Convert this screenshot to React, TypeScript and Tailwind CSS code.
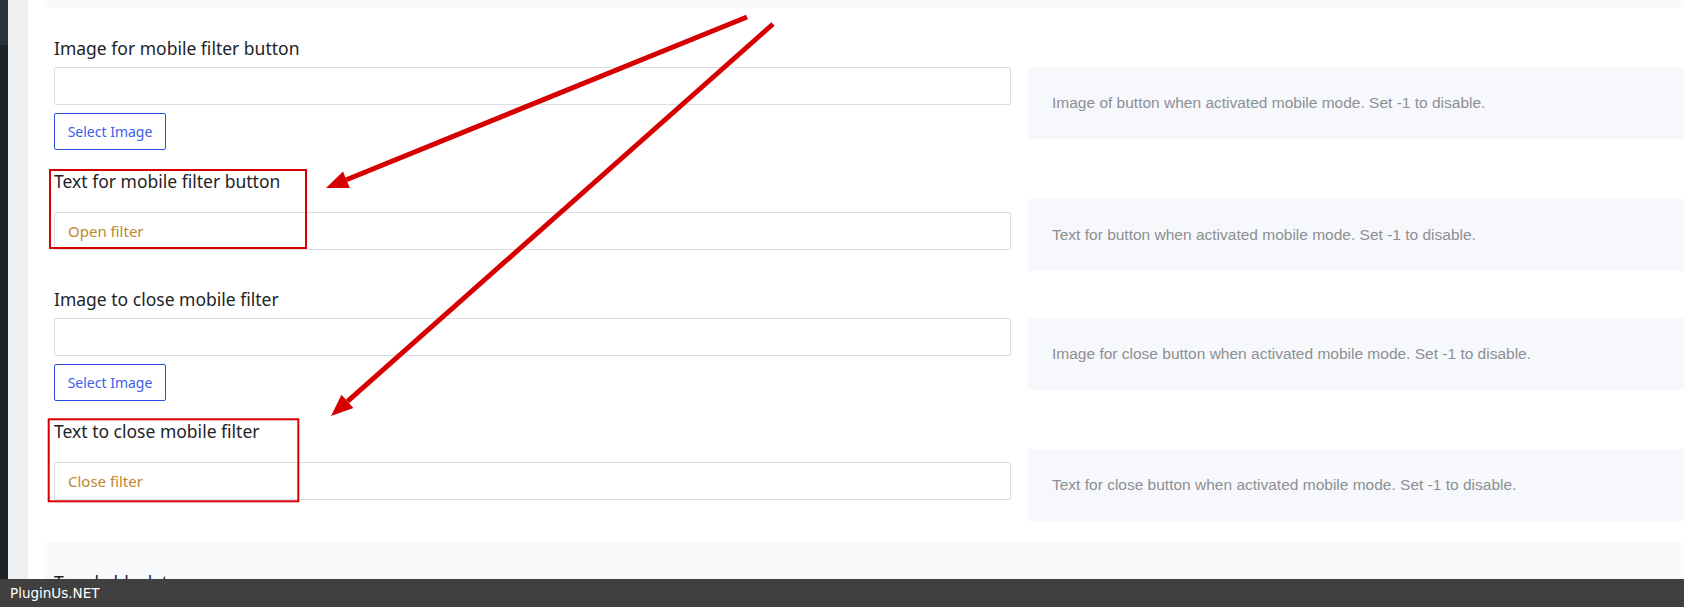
import React from "react";

const labelCls = "h-[24px] leading-[24px] text-[17.5px] text-[#1d2327] font-['Noto_Sans',sans-serif]";
const inputCls = "h-[38px] w-full border border-[#dcdde3] rounded-[2px] bg-white flex items-center pl-[13px] text-[15px] text-[#bd882f] font-['Noto_Sans',sans-serif]";
const descCls = "flex-1 h-[72px] bg-[#f7f8fb] flex items-center pl-[24px] text-[15.5px] text-[#8c8f94] font-['Liberation_Sans',sans-serif]";
const btnCls = "mt-[8px] h-[37px] w-[112px] border border-[#2d4fe0] rounded-[2px] bg-white text-[14px] text-[#3c5ee8] font-['Noto_Sans',sans-serif] flex items-center justify-center";

function Row({ label, value, button, desc, text }: { label: string; value?: string; button?: boolean; desc: string; text?: boolean }) {
  return (
    <div className="flex items-start gap-[17px]">
      <div className="w-[957px] shrink-0 flex flex-col">
        <div className={labelCls}>{label}</div>
        <div className={inputCls + (text ? " mt-[19px]" : " mt-[7px]")}>{value}</div>
        {button && <div className={btnCls}>Select Image</div>}
      </div>
      <div className={descCls + (text ? " mt-[30px]" : " mt-[31px]")}>{desc}</div>
    </div>
  );
}

export default function App() {
  return (
    <div className="relative w-[1684px] h-[607px] overflow-hidden flex flex-col bg-white">
      <div className="h-[579px] shrink-0 overflow-hidden flex">
        <div className="w-[8px] shrink-0 flex flex-col">
          <div className="h-[45px] shrink-0 bg-[#2c3338]" />
          <div className="flex-1 bg-[#1d2327]" />
        </div>
        <div className="w-[20px] shrink-0 bg-[#f0f0f1]" />
        <div className="flex-1 flex flex-col bg-white">
          <div className="ml-[16px] h-[8px] shrink-0 bg-[#f9fafc]" />
          <div className="pl-[26px] shrink-0 flex flex-col">
            <div className="mt-[28px]">
              <Row label="Image for mobile filter button" button desc="Image of button when activated mobile mode. Set -1 to disable." />
            </div>
            <div className="mt-[19px]">
              <Row label="Text for mobile filter button" value="Open filter" text desc="Text for button when activated mobile mode. Set -1 to disable." />
            </div>
            <div className="mt-[16px]">
              <Row label="Image to close mobile filter" button desc="Image for close button when activated mobile mode. Set -1 to disable." />
            </div>
            <div className="mt-[18px]">
              <Row label="Text to close mobile filter" value="Close filter" text desc="Text for close button when activated mobile mode. Set -1 to disable." />
            </div>
          </div>
          <div className="mt-[21px] ml-[16px] h-[80px] shrink-0 bg-[#f9fafc] pl-[10px] pt-[28px]">
            <div className={labelCls}>Toggle block type</div>
          </div>
        </div>
      </div>
      <div className="h-[28px] shrink-0 bg-[#404040] flex items-center pl-[10px] text-[13.5px] text-white font-['DejaVu_Sans',sans-serif]">
        PluginUs.NET
      </div>

      <svg className="absolute left-0 top-0 pointer-events-none" width="1684" height="607" viewBox="0 0 1684 607">
        <rect x="50" y="170" width="256" height="78" fill="none" stroke="#d70000" strokeWidth="2" />
        <rect x="48.7" y="419.3" width="249.6" height="82" fill="none" stroke="#d70000" strokeWidth="2" />
        <line x1="747" y1="17" x2="346.4" y2="179.7" stroke="#d70000" strokeWidth="5" />
        <polygon points="326,188 343,171.4 349.8,188.1" fill="#d70000" />
        <line x1="773" y1="24" x2="347.5" y2="401.4" stroke="#d70000" strokeWidth="5" />
        <polygon points="331,416 341.5,394.7 353.4,408.1" fill="#d70000" />
      </svg>
    </div>
  );
}
